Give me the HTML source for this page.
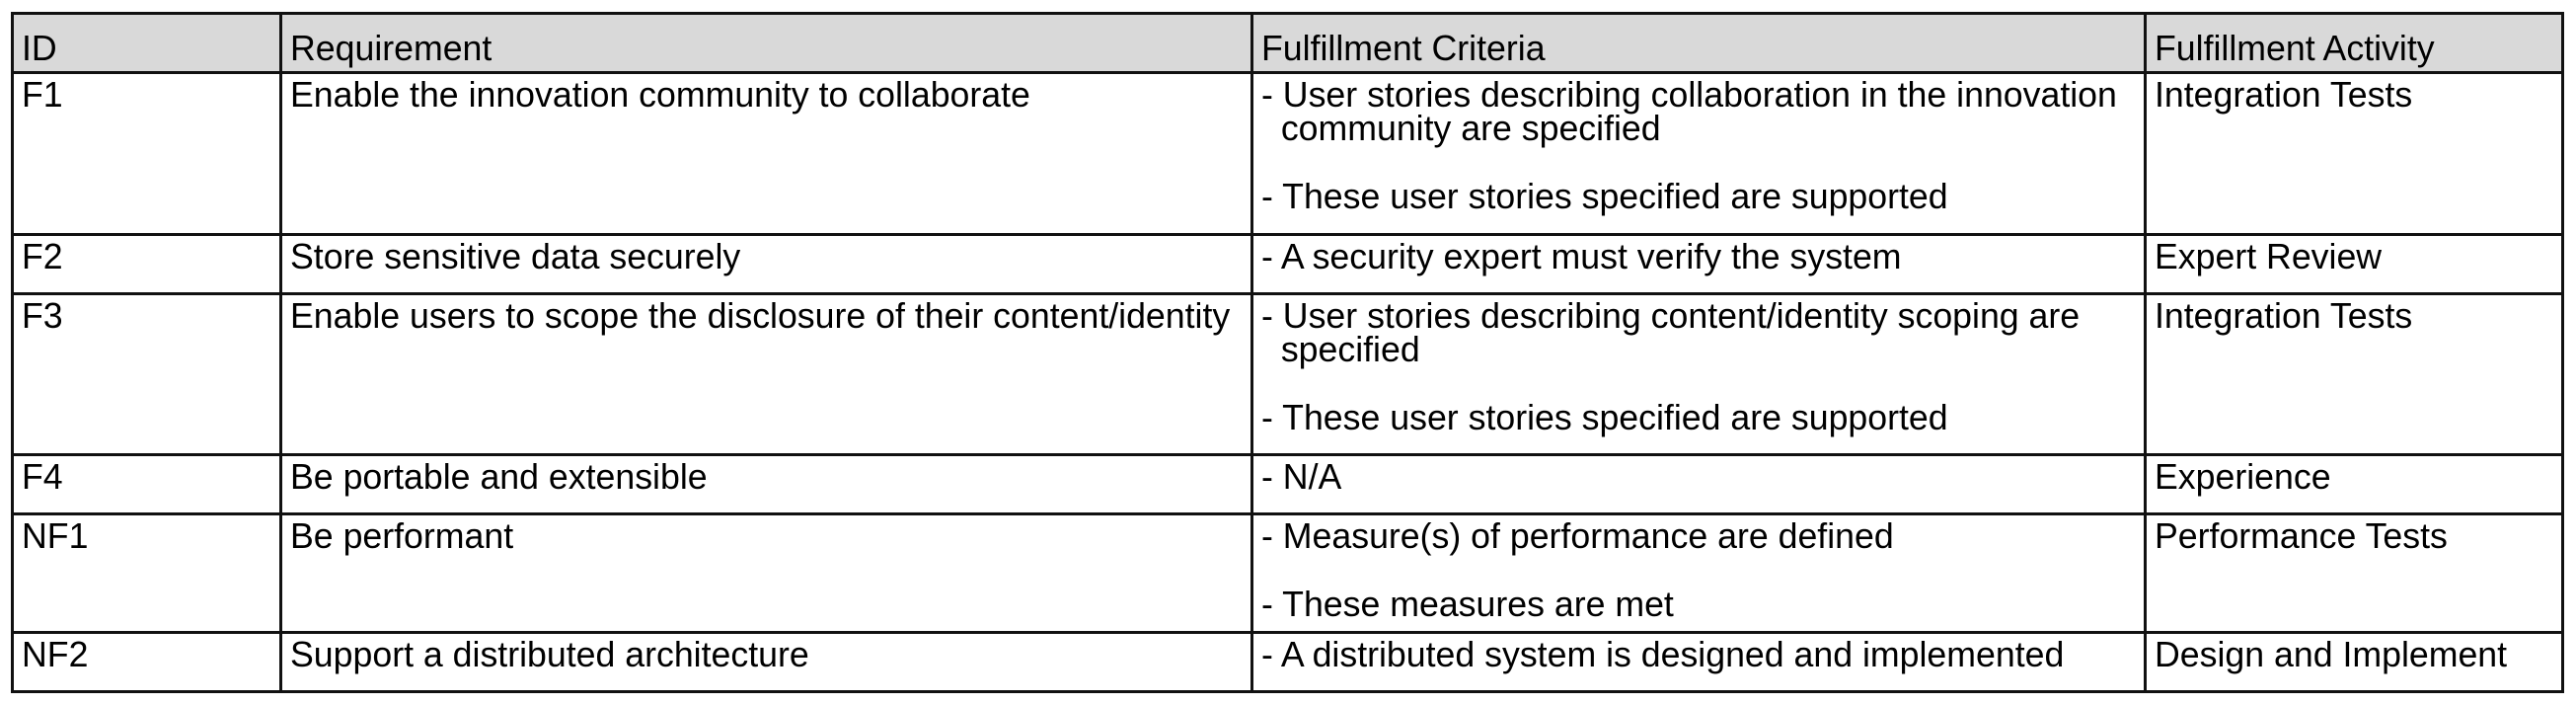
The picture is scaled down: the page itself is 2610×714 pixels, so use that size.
<!DOCTYPE html>
<html><head><style>
body{margin:0;width:2610px;height:714px;background:#fff;position:relative;overflow:hidden;font-family:"Liberation Sans",Arial,sans-serif;font-size:35.7px;line-height:34px;color:#000}
.h{position:absolute;left:11px;width:2587px;height:3px;background:#111}
.v{position:absolute;top:12px;width:3px;height:690px;background:#111}
.t{position:absolute;white-space:nowrap}
.hd{position:absolute;left:12px;top:13px;width:2585px;height:60px;background:#d9d9d9}
.g{height:35px}
</style></head><body>
<div class="hd"></div>
<div class="h" style="top:12px"></div>
<div class="h" style="top:72px"></div>
<div class="h" style="top:236px"></div>
<div class="h" style="top:296px"></div>
<div class="h" style="top:459px"></div>
<div class="h" style="top:519px"></div>
<div class="h" style="top:639px"></div>
<div class="h" style="top:699px"></div>
<div class="v" style="left:11px"></div>
<div class="v" style="left:283px"></div>
<div class="v" style="left:1267px"></div>
<div class="v" style="left:2172px"></div>
<div class="v" style="left:2595px"></div>

<div class="t" style="left:22px;top:32px">ID</div>
<div class="t" style="left:294px;top:32px">Requirement</div>
<div class="t" style="left:1278px;top:32px">Fulfillment Criteria</div>
<div class="t" style="left:2183px;top:32px">Fulfillment Activity</div>

<div class="t" style="left:22px;top:79px">F1</div>
<div class="t" style="left:294px;top:79px">Enable the innovation community to collaborate</div>
<div class="t" style="left:1278px;top:79px">- User stories describing collaboration in the innovation<br>&nbsp; community are specified<div class="g"></div>- These user stories specified are supported</div>
<div class="t" style="left:2183px;top:79px">Integration Tests</div>

<div class="t" style="left:22px;top:243px">F2</div>
<div class="t" style="left:294px;top:243px">Store sensitive data securely</div>
<div class="t" style="left:1278px;top:243px">- A security expert must verify the system</div>
<div class="t" style="left:2183px;top:243px">Expert Review</div>

<div class="t" style="left:22px;top:303px">F3</div>
<div class="t" style="left:294px;top:303px">Enable users to scope the disclosure of their content/identity</div>
<div class="t" style="left:1278px;top:303px">- User stories describing content/identity scoping are<br>&nbsp; specified<div class="g"></div>- These user stories specified are supported</div>
<div class="t" style="left:2183px;top:303px">Integration Tests</div>

<div class="t" style="left:22px;top:466px">F4</div>
<div class="t" style="left:294px;top:466px">Be portable and extensible</div>
<div class="t" style="left:1278px;top:466px">- N/A</div>
<div class="t" style="left:2183px;top:466px">Experience</div>

<div class="t" style="left:22px;top:526px">NF1</div>
<div class="t" style="left:294px;top:526px">Be performant</div>
<div class="t" style="left:1278px;top:526px">- Measure(s) of performance are defined<div class="g"></div>- These measures are met</div>
<div class="t" style="left:2183px;top:526px">Performance Tests</div>

<div class="t" style="left:22px;top:646px">NF2</div>
<div class="t" style="left:294px;top:646px">Support a distributed architecture</div>
<div class="t" style="left:1278px;top:646px">- A distributed system is designed and implemented</div>
<div class="t" style="left:2183px;top:646px">Design and Implement</div>
</body></html>
